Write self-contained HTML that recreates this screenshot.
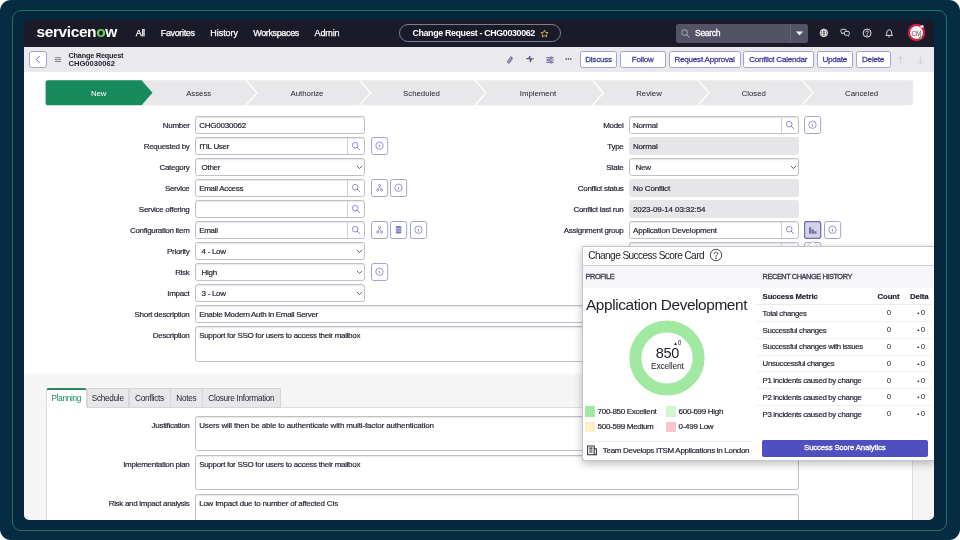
<!DOCTYPE html>
<html lang="en">
<head>
<meta charset="utf-8">
<title>Change Request - CHG0030062</title>
<style>
*{box-sizing:border-box;margin:0;padding:0}
html,body{width:960px;height:540px;overflow:hidden;background:#fff}
body{font-family:"Liberation Sans",sans-serif;font-size:8px;color:#1d1d2b;position:relative}
.abs{position:absolute}
#frame{position:absolute;left:0;top:0;width:960px;height:540px;background:#062c42;border-radius:11px;overflow:hidden}
#ring{position:absolute;left:12px;top:10px;width:935px;height:521px;border:1px solid #1f7460;border-radius:9px;background:#06283e}
#screen{position:absolute;left:24px;top:20px;width:910px;height:500px;background:linear-gradient(to bottom,#1a1a28 0,#1a1a28 40px,#f5f5f6 40px);border-radius:5px;overflow:hidden}
/* everything inside #screen uses page coords minus (24,20) via wrapper */
#w{position:absolute;left:-24px;top:-20px;width:960px;height:540px;will-change:transform}
#topbar{position:absolute;left:24px;top:20px;width:910px;height:27px;background:#1a1a28}
#subbar{position:absolute;left:24px;top:47px;width:910px;height:25px;background:#e9e9ee}
#formbg{position:absolute;left:24px;top:72px;width:910px;height:304px;background:linear-gradient(to bottom,#fff 0,#fff 299.5px,#f5f5f6 304px)}
.nav{position:absolute;top:27px;color:#fff;font-size:9px;line-height:12px;white-space:nowrap;-webkit-text-stroke:0.25px #fff}
.t{position:absolute;white-space:nowrap;line-height:10px}
.lbl{position:absolute;white-space:nowrap;line-height:10px;text-align:right;font-size:8px;letter-spacing:-0.3px;color:#1d1d2b;-webkit-text-stroke:0.18px #1d1d2b}
.inp{position:absolute;height:18px;border:1px solid #bfbfc8;border-radius:2.5px;background:#fff;box-shadow:inset 0 1px 1.5px rgba(0,0,0,.1);font-size:8px;letter-spacing:-0.3px;line-height:17.6px;padding-left:3px;-webkit-text-stroke:0.18px #1d1d2b;white-space:nowrap;overflow:hidden}
.ro{background:#e6e6e9;border-color:#e6e6e9;box-shadow:none}
.btn{position:absolute;top:50.8px;height:17.4px;border:1px solid #a3a1d6;border-radius:2.5px;background:#fff;color:#3c3c96;-webkit-text-stroke:0.28px #3c3c96;font-size:8.1px;letter-spacing:-0.24px;line-height:16.2px;text-align:center;white-space:nowrap}
.ib{position:absolute;width:17px;height:17px;border:1px solid #8f8fcf;border-radius:2px;background:#fff}
.f{font-size:8px;letter-spacing:-0.3px;-webkit-text-stroke:0.18px #1d1d2b}
.tab{position:absolute;top:388px;height:19.5px;border:1px solid #d6d6da;background:#e7e7e9;font-size:8.2px;letter-spacing:-0.29px;line-height:19px;text-align:center;white-space:nowrap;color:#23232f}
.tab.act{background:#fff;border-top:2px solid #24895f;border-left-color:#dcdce0;border-bottom-color:#fff;color:#178a5e;border-radius:3px 3px 0 0;line-height:18px}
.ta{height:35px;line-height:17.6px}
#pop{position:absolute;left:582px;top:246px;width:353px;height:215px;background:#fff;border:1px solid #c4c4cc;border-right:none;border-radius:0 0 0 3px;box-shadow:0 3px 8px rgba(0,0,0,.26)}
.sh{font-size:7.4px;color:#3a3a48;letter-spacing:-0.44px;-webkit-text-stroke:0.3px #3a3a48}
.th{font-size:7.8px;font-weight:bold;color:#1d1d28;letter-spacing:-0.12px;-webkit-text-stroke:0.15px #1d1d28}
</style>
</head>
<body>
<div id="frame">
<div id="ring"></div>
<div id="screen"><div id="w">
<div id="topbar"></div>
<div id="subbar"></div>
<div id="formbg"></div>
<!--TOPBAR-->
<div class="t" style="left:36.6px;top:22px;font-size:15.5px;line-height:20px;font-weight:bold;color:#fff;letter-spacing:-0.42px">servicen<span style="color:#62d84e">o</span>w</div>
<div class="nav" style="left:135.7px;letter-spacing:-0.3px">All</div>
<div class="nav" style="left:160.8px;letter-spacing:-0.36px">Favorites</div>
<div class="nav" style="left:210.2px;letter-spacing:-0.02px">History</div>
<div class="nav" style="left:253.2px;letter-spacing:-0.36px">Workspaces</div>
<div class="nav" style="left:314.6px;letter-spacing:-0.12px">Admin</div>
<div class="abs" style="left:399px;top:24px;width:161.5px;height:18.2px;border:1px solid #7d7d90;border-radius:10px"></div>
<div class="t" style="left:412.4px;top:26.8px;font-size:8.9px;line-height:12px;font-weight:bold;color:#fff;letter-spacing:-0.36px">Change Request - CHG0030062</div>
<svg class="abs" style="left:540.2px;top:29px" width="9" height="9" viewBox="0 0 10 10"><path d="M5 1.2 6.2 3.8 9 4.1 6.9 6 7.5 8.8 5 7.4 2.5 8.8 3.1 6 1 4.1 3.8 3.8Z" fill="none" stroke="#e8c46a" stroke-width="0.9" stroke-linejoin="round"/></svg>
<div class="abs" style="left:676px;top:24px;width:132px;height:18.5px;background:#535267;border-radius:2.5px"></div>
<div class="abs" style="left:790.3px;top:24px;width:1px;height:18.5px;background:#656479"></div>
<svg class="abs" style="left:680px;top:28px" width="11" height="11" viewBox="0 0 11 11"><circle cx="4.6" cy="4.6" r="2.9" fill="none" stroke="#b9b9c8" stroke-width="0.85"/><path d="M6.8 6.8 9.3 9.3" stroke="#b9b9c8" stroke-width="0.95" stroke-linecap="round"/></svg>
<div class="t" style="left:695px;top:27px;font-size:8.6px;line-height:12px;color:#fff;letter-spacing:-0.32px;-webkit-text-stroke:0.3px #fff">Search</div>
<svg class="abs" style="left:795px;top:31px" width="9" height="5" viewBox="0 0 9 5"><path d="M1 0.5H8L4.5 4.3Z" fill="#fff"/></svg>
<!-- globe -->
<svg class="abs" style="left:818.5px;top:28px" width="9.8" height="9.8" viewBox="0 0 11 11" fill="none" stroke="#fff" stroke-width="0.95"><circle cx="5.5" cy="5.5" r="4.2"/><ellipse cx="5.5" cy="5.5" rx="1.9" ry="4.2"/><path d="M1.3 5.5H9.7M2 3.3H9M2 7.7H9"/></svg>
<!-- chat -->
<svg class="abs" style="left:840px;top:28.2px" width="10.4" height="9.6" viewBox="0 0 12 11" fill="#1a1a28" stroke="#fff" stroke-width="0.95" stroke-linejoin="round"><path d="M2.6 1.5H5.6A1.6 1.6 0 0 1 7.2 3.1V4.1A1.6 1.6 0 0 1 5.6 5.7H3.6L2.2 6.8V5.6A1.6 1.6 0 0 1 1 4.1V3.1A1.6 1.6 0 0 1 2.6 1.5Z"/><path d="M6.6 3.9H9.2A1.6 1.6 0 0 1 10.8 5.5V6.7A1.6 1.6 0 0 1 9.8 8.2V9.4L8.3 8.3H6.6A1.6 1.6 0 0 1 5 6.7V5.5A1.6 1.6 0 0 1 6.6 3.9Z"/></svg>
<!-- help -->
<svg class="abs" style="left:861.5px;top:28.1px" width="10.2" height="10.2" viewBox="0 0 11 11" fill="none" stroke="#fff" stroke-width="0.95"><circle cx="5.5" cy="5.5" r="4.3"/><path d="M4.1 4.4C4.1 2.9 6.9 2.9 6.9 4.4C6.9 5.4 5.5 5.4 5.5 6.5" stroke-linecap="round"/><circle cx="5.5" cy="7.9" r="0.3" fill="#fff"/></svg>
<!-- bell -->
<svg class="abs" style="left:883.5px;top:27.7px" width="10.4" height="10.4" viewBox="0 0 11 11" fill="none" stroke="#fff" stroke-width="0.95" stroke-linejoin="round"><path d="M2 7.8C3 6.9 2.8 5.4 3 4.2C3.3 2.8 4.3 2 5.5 2C6.7 2 7.7 2.8 8 4.2C8.2 5.4 8 6.9 9 7.8Z"/><path d="M4.6 9.1C5 9.7 6 9.7 6.4 9.1"/></svg>
<!-- avatar -->
<div class="abs" style="left:908.1px;top:24.2px;width:17.2px;height:17.2px;border-radius:50%;background:#faf0f2;border:2.5px solid #d3214c;box-shadow:0 0 1px #d3214c"></div>
<div class="t" style="left:911.6px;top:28.5px;font-size:6.4px;line-height:9px;color:#55555f;letter-spacing:-0.3px">CM</div>
<div class="abs" style="left:919.3px;top:35.5px;width:3px;height:3px;border-radius:50%;background:#6cc04a"></div>
<div class="abs" style="left:920.4px;top:24.6px;width:3.8px;height:3.8px;border-radius:50%;background:#fff;border:0.8px solid #e8b4c0"></div>
<!--SUBBAR-->
<div class="abs" style="left:29.3px;top:50.7px;width:17.5px;height:17.4px;border:1px solid #a3a1d6;border-radius:3px;background:#fff"></div>
<svg class="abs" style="left:34px;top:55px" width="8" height="9" viewBox="0 0 8 9"><path d="M5.4 1.2 2.4 4.5 5.4 7.8" fill="none" stroke="#6e6cb5" stroke-width="1" stroke-linecap="round" stroke-linejoin="round"/></svg>
<svg class="abs" style="left:54px;top:56px" width="8" height="7" viewBox="0 0 8 7"><path d="M1 1.7H7M1 3.6H7M1 5.5H7" stroke="#6a6a78" stroke-width="0.8"/></svg>
<div class="t" style="left:68.5px;top:50.8px;font-size:7.3px;line-height:9px;font-weight:bold;color:#23232f;letter-spacing:-0.2px">Change Request</div>
<div class="t" style="left:68.5px;top:59.4px;font-size:7.6px;line-height:9px;font-weight:bold;color:#23232f">CHG0030062</div>
<!-- icons -->
<svg class="abs" style="left:505.4px;top:54.6px" width="10" height="10" viewBox="0 0 10 10" fill="none" stroke="#7a79b2" stroke-width="1.15" stroke-linecap="round"><path d="M7.3 3.6 4.4 7.6C3.6 8.7 1.9 7.5 2.7 6.4L5.6 2.3C6.2 1.5 7.5 2.4 6.9 3.2L4.3 6.8"/></svg>
<svg class="abs" style="left:525px;top:54.4px" width="10" height="10" viewBox="0 0 10 10" fill="none" stroke="#4d4d7c" stroke-width="1.1" stroke-linejoin="round" stroke-linecap="round"><path d="M1.7 4.6H4L4.8 2.2 5.4 7.8 6.3 4.8H8.3"/></svg>
<svg class="abs" style="left:544.5px;top:54.6px" width="10" height="10" viewBox="0 0 10 10" fill="none" stroke="#55558a" stroke-width="0.9"><path d="M1.3 2.7H8.7M1.3 5H8.7M1.3 7.3H8.7"/><circle cx="6.2" cy="2.7" r="0.9" fill="#e9e9ee"/><circle cx="3.6" cy="5" r="0.9" fill="#e9e9ee"/><circle cx="6.2" cy="7.3" r="0.9" fill="#e9e9ee"/></svg>
<svg class="abs" style="left:564.4px;top:57.2px" width="9" height="4" viewBox="0 0 9 4"><circle cx="2.2" cy="2" r="0.8" fill="#2e2e46"/><circle cx="4.5" cy="2" r="0.8" fill="#2e2e46"/><circle cx="6.8" cy="2" r="0.8" fill="#2e2e46"/></svg>
<div class="btn" style="left:580px;width:37px">Discuss</div>
<div class="btn" style="left:620px;width:45.5px">Follow</div>
<div class="btn" style="left:668.5px;width:72px">Request Approval</div>
<div class="btn" style="left:743px;width:70.5px">Conflict Calendar</div>
<div class="btn" style="left:816.5px;width:36.5px">Update</div>
<div class="btn" style="left:855.5px;width:35px">Delete</div>
<svg class="abs" style="left:896px;top:55px" width="9" height="10" viewBox="0 0 9 10" fill="none" stroke="#cfcfd6" stroke-width="0.9" stroke-linecap="round" stroke-linejoin="round"><path d="M4.5 8.4V1.8M2 4.2 4.5 1.7 7 4.2"/></svg>
<svg class="abs" style="left:916px;top:55px" width="9" height="10" viewBox="0 0 9 10" fill="none" stroke="#cfcfd6" stroke-width="0.9" stroke-linecap="round" stroke-linejoin="round"><path d="M4.5 1.6V8.2M2 5.8 4.5 8.3 7 5.8"/></svg>
<!--FLOW-->
<svg class="abs" style="left:45px;top:79px" width="870" height="28" viewBox="45 79 870 28">
<rect x="45.6" y="80.3" width="867.3" height="25" rx="2" fill="#e8e8ea"/>
<path d="M47.6 80.3H141.5L152.5 92.8 141.5 105.3H47.6A2 2 0 0 1 45.6 103.3V82.3A2 2 0 0 1 47.6 80.3Z" fill="#178a5e"/>
<g fill="none" stroke="#fff" stroke-width="1.3">
<path d="M246 80.3 257 92.8 246 105.3"/><path d="M359.6 80.3 370.6 92.8 359.6 105.3"/><path d="M475 80.3 486 92.8 475 105.3"/><path d="M592.4 80.3 603.4 92.8 592.4 105.3"/><path d="M698 80.3 709 92.8 698 105.3"/><path d="M802 80.3 813 92.8 802 105.3"/>
</g>
<g font-family="Liberation Sans, sans-serif" font-size="7.8" text-anchor="middle" fill="#23232f">
<text x="98.7" y="95.5" fill="#fff">New</text><text x="198.7" y="95.5">Assess</text><text x="307" y="95.5">Authorize</text><text x="421.5" y="95.5">Scheduled</text><text x="538" y="95.5">Implement</text><text x="649" y="95.5">Review</text><text x="753.8" y="95.5">Closed</text><text x="861.6" y="95.5">Canceled</text>
</g>
</svg>
<!--FORM-->
<div class="lbl" style="right:770.5px;top:121.0px">Number</div>
<div class="inp" style="left:195.2px;top:116.0px;width:169.7px;letter-spacing:-0.2px">CHG0030062</div>
<div class="lbl" style="right:770.5px;top:142.0px">Requested by</div>
<div class="inp" style="left:195.2px;top:137.0px;width:169.7px">ITIL User</div>
<div class="abs" style="left:347.3px;top:138.0px;width:1px;height:16px;background:#cfcfd6"></div>
<svg class="abs" style="left:351.1px;top:141px" width="10" height="10" viewBox="0 0 10 10"><circle cx="4.2" cy="4.2" r="2.8" fill="none" stroke="#7776bd" stroke-width="0.8"/><path d="M6.3 6.3 8.6 8.6" stroke="#7776bd" stroke-width="0.9" stroke-linecap="round"/></svg>
<div class="lbl" style="right:770.5px;top:163.0px">Category</div>
<div class="inp" style="left:195.2px;top:158.0px;width:169.7px;padding-left:5.4px">Other</div>
<svg class="abs" style="left:356.4px;top:164.8px" width="7" height="5" viewBox="0 0 7 5"><path d="M1.2 1.2 3.5 3.5 5.8 1.2" fill="none" stroke="#3d3d4d" stroke-width="0.8" stroke-linecap="round" stroke-linejoin="round"/></svg>
<div class="lbl" style="right:770.5px;top:184.0px">Service</div>
<div class="inp" style="left:195.2px;top:179.0px;width:169.7px">Email Access</div>
<div class="abs" style="left:347.3px;top:180.0px;width:1px;height:16px;background:#cfcfd6"></div>
<svg class="abs" style="left:351.1px;top:183px" width="10" height="10" viewBox="0 0 10 10"><circle cx="4.2" cy="4.2" r="2.8" fill="none" stroke="#7776bd" stroke-width="0.8"/><path d="M6.3 6.3 8.6 8.6" stroke="#7776bd" stroke-width="0.9" stroke-linecap="round"/></svg>
<div class="lbl" style="right:770.5px;top:205.0px">Service offering</div>
<div class="inp" style="left:195.2px;top:200.0px;width:169.7px"></div>
<div class="abs" style="left:347.3px;top:201.0px;width:1px;height:16px;background:#cfcfd6"></div>
<svg class="abs" style="left:351.1px;top:204px" width="10" height="10" viewBox="0 0 10 10"><circle cx="4.2" cy="4.2" r="2.8" fill="none" stroke="#7776bd" stroke-width="0.8"/><path d="M6.3 6.3 8.6 8.6" stroke="#7776bd" stroke-width="0.9" stroke-linecap="round"/></svg>
<div class="lbl" style="right:770.5px;top:226.0px">Configuration item</div>
<div class="inp" style="left:195.2px;top:221.0px;width:169.7px">Email</div>
<div class="abs" style="left:347.3px;top:222.0px;width:1px;height:16px;background:#cfcfd6"></div>
<svg class="abs" style="left:351.1px;top:225px" width="10" height="10" viewBox="0 0 10 10"><circle cx="4.2" cy="4.2" r="2.8" fill="none" stroke="#7776bd" stroke-width="0.8"/><path d="M6.3 6.3 8.6 8.6" stroke="#7776bd" stroke-width="0.9" stroke-linecap="round"/></svg>
<div class="lbl" style="right:770.5px;top:247.0px">Priority</div>
<div class="inp" style="left:195.2px;top:242.0px;width:169.7px;padding-left:5.4px">4 - Low</div>
<svg class="abs" style="left:356.4px;top:248.8px" width="7" height="5" viewBox="0 0 7 5"><path d="M1.2 1.2 3.5 3.5 5.8 1.2" fill="none" stroke="#3d3d4d" stroke-width="0.8" stroke-linecap="round" stroke-linejoin="round"/></svg>
<div class="lbl" style="right:770.5px;top:268.0px">Risk</div>
<div class="inp" style="left:195.2px;top:263.0px;width:169.7px;padding-left:5.4px">High</div>
<svg class="abs" style="left:356.4px;top:269.8px" width="7" height="5" viewBox="0 0 7 5"><path d="M1.2 1.2 3.5 3.5 5.8 1.2" fill="none" stroke="#3d3d4d" stroke-width="0.8" stroke-linecap="round" stroke-linejoin="round"/></svg>
<div class="lbl" style="right:770.5px;top:289.0px">Impact</div>
<div class="inp" style="left:195.2px;top:284.0px;width:169.7px;padding-left:5.4px">3 - Low</div>
<svg class="abs" style="left:356.4px;top:290.8px" width="7" height="5" viewBox="0 0 7 5"><path d="M1.2 1.2 3.5 3.5 5.8 1.2" fill="none" stroke="#3d3d4d" stroke-width="0.8" stroke-linecap="round" stroke-linejoin="round"/></svg>
<svg class="abs" style="left:370.5px;top:137.0px" width="18" height="18" viewBox="0 0 18 18"><rect x="0.5" y="0.5" width="16.2" height="17" rx="2.2" fill="#fff" stroke="#9a98d0" stroke-width="0.9"/><circle cx="8.5" cy="8.7" r="3.7" fill="none" stroke="#6d6cb8" stroke-width="0.7"/><path d="M8.5 8V10.6" stroke="#6d6cb8" stroke-width="0.7"/><circle cx="8.5" cy="6.9" r="0.4" fill="#6d6cb8"/></svg>
<svg class="abs" style="left:370.5px;top:179.0px" width="18" height="18" viewBox="0 0 18 18"><rect x="0.5" y="0.5" width="16.2" height="17" rx="2.2" fill="#fff" stroke="#9a98d0" stroke-width="0.9"/><g fill="none" stroke="#6d6cb8" stroke-width="0.7"><circle cx="8.6" cy="6.4" r="1.05"/><circle cx="6.7" cy="11.1" r="1.05"/><circle cx="10.5" cy="11.1" r="1.05"/><path d="M8.6 7.5V8.3L6.9 10M8.6 8.3 10.3 10"/></g></svg>
<svg class="abs" style="left:390px;top:179.0px" width="18" height="18" viewBox="0 0 18 18"><rect x="0.5" y="0.5" width="16.2" height="17" rx="2.2" fill="#fff" stroke="#9a98d0" stroke-width="0.9"/><circle cx="8.5" cy="8.7" r="3.7" fill="none" stroke="#6d6cb8" stroke-width="0.7"/><path d="M8.5 8V10.6" stroke="#6d6cb8" stroke-width="0.7"/><circle cx="8.5" cy="6.9" r="0.4" fill="#6d6cb8"/></svg>
<svg class="abs" style="left:370.5px;top:221.0px" width="18" height="18" viewBox="0 0 18 18"><rect x="0.5" y="0.5" width="16.2" height="17" rx="2.2" fill="#fff" stroke="#9a98d0" stroke-width="0.9"/><g fill="none" stroke="#6d6cb8" stroke-width="0.7"><circle cx="8.6" cy="6.4" r="1.05"/><circle cx="6.7" cy="11.1" r="1.05"/><circle cx="10.5" cy="11.1" r="1.05"/><path d="M8.6 7.5V8.3L6.9 10M8.6 8.3 10.3 10"/></g></svg>
<svg class="abs" style="left:390px;top:221.0px" width="18" height="18" viewBox="0 0 18 18"><rect x="0.5" y="0.5" width="16.2" height="17" rx="2.2" fill="#fff" stroke="#9a98d0" stroke-width="0.9"/><g><rect x="5.9" y="5" width="5.4" height="7.6" rx="1.3" fill="#7a79c6"/><path d="M5.9 7.6H11.3M5.9 10H11.3" stroke="#fff" stroke-width="0.6"/></g></svg>
<svg class="abs" style="left:409.7px;top:221.0px" width="18" height="18" viewBox="0 0 18 18"><rect x="0.5" y="0.5" width="16.2" height="17" rx="2.2" fill="#fff" stroke="#9a98d0" stroke-width="0.9"/><circle cx="8.5" cy="8.7" r="3.7" fill="none" stroke="#6d6cb8" stroke-width="0.7"/><path d="M8.5 8V10.6" stroke="#6d6cb8" stroke-width="0.7"/><circle cx="8.5" cy="6.9" r="0.4" fill="#6d6cb8"/></svg>
<svg class="abs" style="left:370.5px;top:263.0px" width="18" height="18" viewBox="0 0 18 18"><rect x="0.5" y="0.5" width="16.2" height="17" rx="2.2" fill="#fff" stroke="#9a98d0" stroke-width="0.9"/><circle cx="8.5" cy="8.7" r="3.7" fill="none" stroke="#6d6cb8" stroke-width="0.7"/><path d="M8.5 8V10.6" stroke="#6d6cb8" stroke-width="0.7"/><circle cx="8.5" cy="6.9" r="0.4" fill="#6d6cb8"/></svg>
<div class="lbl" style="right:770.5px;top:310.0px">Short description</div>
<div class="inp" style="left:195.2px;top:305.0px;width:603.8px">Enable Modern Auth in Email Server</div>
<div class="lbl" style="right:770.5px;top:331.0px">Description</div>
<div class="inp ta" style="left:195.2px;top:326px;width:603.8px;height:36px">Support for SSO for users to access their mailbox</div>
<div class="lbl" style="right:336.5px;top:121.0px">Model</div>
<div class="inp" style="left:629px;top:116.0px;width:169.7px;letter-spacing:-0.18px">Normal</div>
<div class="abs" style="left:781.1px;top:117.0px;width:1px;height:16px;background:#cfcfd6"></div>
<svg class="abs" style="left:784.9px;top:120px" width="10" height="10" viewBox="0 0 10 10"><circle cx="4.2" cy="4.2" r="2.8" fill="none" stroke="#7776bd" stroke-width="0.8"/><path d="M6.3 6.3 8.6 8.6" stroke="#7776bd" stroke-width="0.9" stroke-linecap="round"/></svg>
<div class="lbl" style="right:336.5px;top:142.0px">Type</div>
<div class="inp ro" style="left:629px;top:137.0px;width:169.7px;letter-spacing:-0.18px">Normal</div>
<div class="lbl" style="right:336.5px;top:163.0px">State</div>
<div class="inp" style="left:629px;top:158.0px;width:169.7px;letter-spacing:-0.2px;padding-left:5.4px">New</div>
<svg class="abs" style="left:790.2px;top:164.8px" width="7" height="5" viewBox="0 0 7 5"><path d="M1.2 1.2 3.5 3.5 5.8 1.2" fill="none" stroke="#3d3d4d" stroke-width="0.8" stroke-linecap="round" stroke-linejoin="round"/></svg>
<div class="lbl" style="right:336.5px;top:184.0px">Conflict status</div>
<div class="inp ro" style="left:629px;top:179.0px;width:169.7px;letter-spacing:-0.2px">No Conflict</div>
<div class="lbl" style="right:336.5px;top:205.0px">Conflict last run</div>
<div class="inp ro" style="left:629px;top:200.0px;width:169.7px;letter-spacing:-0.1px">2023-09-14 03:32:54</div>
<div class="lbl" style="right:336.5px;top:226.0px">Assignment group</div>
<div class="inp" style="left:629px;top:221.0px;width:169.7px;letter-spacing:-0.2px">Application Development</div>
<div class="abs" style="left:781.1px;top:222.0px;width:1px;height:16px;background:#cfcfd6"></div>
<svg class="abs" style="left:784.9px;top:225px" width="10" height="10" viewBox="0 0 10 10"><circle cx="4.2" cy="4.2" r="2.8" fill="none" stroke="#7776bd" stroke-width="0.8"/><path d="M6.3 6.3 8.6 8.6" stroke="#7776bd" stroke-width="0.9" stroke-linecap="round"/></svg>
<div class="inp" style="left:629px;top:242.0px;width:169.7px"></div>
<div class="abs" style="left:781.1px;top:243.0px;width:1px;height:16px;background:#cfcfd6"></div>
<svg class="abs" style="left:784.9px;top:246px" width="10" height="10" viewBox="0 0 10 10"><circle cx="4.2" cy="4.2" r="2.8" fill="none" stroke="#7776bd" stroke-width="0.8"/><path d="M6.3 6.3 8.6 8.6" stroke="#7776bd" stroke-width="0.9" stroke-linecap="round"/></svg>
<svg class="abs" style="left:804px;top:116.0px" width="18" height="18" viewBox="0 0 18 18"><rect x="0.5" y="0.5" width="16.2" height="17" rx="2.2" fill="#fff" stroke="#9a98d0" stroke-width="0.9"/><circle cx="8.5" cy="8.7" r="3.7" fill="none" stroke="#6d6cb8" stroke-width="0.7"/><path d="M8.5 8V10.6" stroke="#6d6cb8" stroke-width="0.7"/><circle cx="8.5" cy="6.9" r="0.4" fill="#6d6cb8"/></svg>
<svg class="abs" style="left:804.2px;top:221.0px" width="18" height="18" viewBox="0 0 18 18"><rect x="0.5" y="0.5" width="16.2" height="17" rx="2.2" fill="#d3d2ea" stroke="#6f6eae" stroke-width="1.3"/><g fill="#706f9e"><rect x="5.1" y="6.3" width="2.2" height="6.4" rx="0.3"/><rect x="7.6" y="8.6" width="2.4" height="4.1" rx="0.3"/><rect x="10.3" y="10.2" width="2.3" height="2.5" rx="0.3"/></g></svg>
<svg class="abs" style="left:824px;top:221.0px" width="18" height="18" viewBox="0 0 18 18"><rect x="0.5" y="0.5" width="16.2" height="17" rx="2.2" fill="#fff" stroke="#9a98d0" stroke-width="0.9"/><circle cx="8.5" cy="8.7" r="3.7" fill="none" stroke="#6d6cb8" stroke-width="0.7"/><path d="M8.5 8V10.6" stroke="#6d6cb8" stroke-width="0.7"/><circle cx="8.5" cy="6.9" r="0.4" fill="#6d6cb8"/></svg>
<svg class="abs" style="left:804px;top:242.0px" width="18" height="18" viewBox="0 0 18 18"><rect x="0.5" y="0.5" width="16.2" height="17" rx="2.2" fill="#fff" stroke="#9a98d0" stroke-width="0.9"/><circle cx="8.5" cy="8.7" r="3.7" fill="none" stroke="#6d6cb8" stroke-width="0.7"/><path d="M8.5 8V10.6" stroke="#6d6cb8" stroke-width="0.7"/><circle cx="8.5" cy="6.9" r="0.4" fill="#6d6cb8"/></svg>
<!--TABS-->
<div class="abs" style="left:45.5px;top:407px;width:867.5px;height:140px;background:#fff;border:1px solid #dcdce0"></div>
<div class="tab" style="left:86.5px;width:42.5px">Schedule</div>
<div class="tab" style="left:128.5px;width:42px">Conflicts</div>
<div class="tab" style="left:170px;width:32.5px">Notes</div>
<div class="tab" style="left:202px;width:78.5px">Closure Information</div>
<div class="tab act" style="left:45.5px;width:41.5px">Planning</div>
<div class="lbl" style="right:770.5px;top:421px">Justification</div>
<div class="inp ta" style="left:195.2px;top:416px;width:603.8px;letter-spacing:-0.15px">Users will then be able to authenticate with multi-factor authentication</div>
<div class="lbl" style="right:770.5px;top:460px">Implementation plan</div>
<div class="inp ta" style="left:195.2px;top:455px;width:603.8px;letter-spacing:-0.3px">Support for SSO for users to access their mailbox</div>
<div class="lbl" style="right:770.5px;top:499px">Risk and impact analysis</div>
<div class="inp ta" style="left:195.2px;top:494px;width:603.8px;letter-spacing:-0.24px">Low Impact due to number of affected CIs</div>
<!--POPUP-->
<svg class="abs" style="left:804px;top:240px" width="18" height="8" viewBox="0 0 18 8"><path d="M1.5 8 8.7 1 16 8Z" fill="#fff" stroke="#b9b9c4" stroke-width="0.8"/></svg>
<div id="pop"></div>
<div class="t" style="left:588.3px;top:249.2px;font-size:10.1px;line-height:13px;letter-spacing:-0.58px;color:#23232f">Change Success Score Card</div>
<svg class="abs" style="left:708.8px;top:248.2px" width="14" height="14" viewBox="0 0 14 14" fill="none" stroke="#2a2a36" stroke-width="0.85"><circle cx="7" cy="7" r="5.7"/><path d="M5.2 5.6C5.2 3.6 8.8 3.6 8.8 5.6C8.8 6.9 7 6.9 7 8.4" stroke-linecap="round"/><circle cx="7" cy="10.2" r="0.4" fill="#2a2a36"/></svg>
<div class="abs" style="left:583px;top:264.8px;width:351px;height:23px;background:#f6f6f8;border-top:1px solid #cfcfd6"></div>
<div class="t sh" style="left:585.6px;top:271.6px;">PROFILE</div>
<div class="t sh" style="left:762.6px;top:271.6px;">RECENT CHANGE HISTORY</div>
<div class="t" style="left:586px;top:294.5px;font-size:15.4px;line-height:20px;letter-spacing:-0.4px;color:#23232f">Application Development</div>
<svg class="abs" style="left:626.3px;top:317.4px" width="82" height="82" viewBox="0 0 82 82"><circle cx="41" cy="41" r="31.6" fill="none" stroke="#a1e8a0" stroke-width="12"/></svg>
<div class="t" style="left:637.3px;top:345.3px;width:60px;text-align:center;font-size:14.5px;line-height:16px;letter-spacing:-0.4px;color:#23232f">850</div>
<div class="t" style="left:637.3px;top:361.3px;width:60px;text-align:center;font-size:8.5px;line-height:10px;letter-spacing:-0.2px;color:#23232f">Excellent</div>
<div class="t" style="left:673.2px;top:338.6px;font-size:6.5px;line-height:8px;color:#23232f"><span style="font-size:4.6px;vertical-align:0.3px">&#9650;</span>0</div>
<div class="abs" style="left:584.6px;top:406.4px;width:10.4px;height:10.4px;background:#a1e8a0"></div>
<div class="t f" style="left:597.6px;top:406.79999999999995px;">700-850 Excellent</div>
<div class="abs" style="left:665.6px;top:406.4px;width:10.4px;height:10.4px;background:#d4f3d1"></div>
<div class="t f" style="left:678.6px;top:406.79999999999995px;">600-699 High</div>
<div class="abs" style="left:584.6px;top:421.8px;width:10.4px;height:10.4px;background:#fdefc6"></div>
<div class="t f" style="left:597.6px;top:422.2px;">500-599 Medium</div>
<div class="abs" style="left:665.6px;top:421.8px;width:10.4px;height:10.4px;background:#f9c4cb"></div>
<div class="t f" style="left:678.6px;top:422.2px;">0-499 Low</div>
<div class="abs" style="left:584.5px;top:440.6px;width:168px;height:1px;background:#eeeef2"></div>
<svg class="abs" style="left:585.6px;top:444.2px" width="12" height="12.6" viewBox="0 0 11 11" fill="none" stroke="#2a2a36" stroke-width="0.95"><path d="M1.5 1.5H7.5V9.5H1.5ZM7.5 4H9.5V9.5H7.5M3 3.5H6M3 5.3H6M3 7.1H6"/></svg>
<div class="t f" style="left:602.8px;top:446.2px;">Team Develops ITSM Applications in London</div>
<div class="abs" style="left:761.5px;top:439.6px;width:166.6px;height:17.1px;background:#4f4fc0;border-radius:2px"></div>
<div class="t" style="left:761.5px;top:443.3px;width:166.6px;text-align:center;font-size:7.9px;line-height:10px;color:#fff;letter-spacing:-0.2px;-webkit-text-stroke:0.3px #fff">Success Score Analytics</div>
<div class="t th" style="left:762.6px;top:292.3px;">Success Metric</div>
<div class="t th" style="left:873.5px;top:292.3px;width:30px;text-align:center">Count</div>
<div class="t th" style="left:904.2px;top:292.3px;width:30px;text-align:center">Delta</div>
<div class="abs" style="left:756px;top:303.8px;width:176px;height:1px;background:#ececf0"></div>
<div class="t f" style="left:762.6px;top:308.8px;font-size:7.8px;letter-spacing:-0.31px">Total changes</div>
<div class="t f" style="left:878.9px;top:308.4px;width:20px;text-align:center;font-size:7.9px;-webkit-text-stroke:0">0</div>
<div class="t f" style="left:916.6px;top:308.4px;font-size:7.9px;-webkit-text-stroke:0"><span style="font-size:3.6px;vertical-align:1.3px;letter-spacing:0.5px">&#9650;</span>0</div>
<div class="abs" style="left:756px;top:320.9px;width:176px;height:1px;background:#f0f0f4"></div>
<div class="t f" style="left:762.6px;top:325.6px;font-size:7.8px;letter-spacing:-0.31px">Successful changes</div>
<div class="t f" style="left:878.9px;top:325.2px;width:20px;text-align:center;font-size:7.9px;-webkit-text-stroke:0">0</div>
<div class="t f" style="left:916.6px;top:325.2px;font-size:7.9px;-webkit-text-stroke:0"><span style="font-size:3.6px;vertical-align:1.3px;letter-spacing:0.5px">&#9650;</span>0</div>
<div class="abs" style="left:756px;top:337.7px;width:176px;height:1px;background:#f0f0f4"></div>
<div class="t f" style="left:762.6px;top:342.4px;font-size:7.8px;letter-spacing:-0.31px">Successful changes with issues</div>
<div class="t f" style="left:878.9px;top:342.0px;width:20px;text-align:center;font-size:7.9px;-webkit-text-stroke:0">0</div>
<div class="t f" style="left:916.6px;top:342.0px;font-size:7.9px;-webkit-text-stroke:0"><span style="font-size:3.6px;vertical-align:1.3px;letter-spacing:0.5px">&#9650;</span>0</div>
<div class="abs" style="left:756px;top:354.5px;width:176px;height:1px;background:#f0f0f4"></div>
<div class="t f" style="left:762.6px;top:359.2px;font-size:7.8px;letter-spacing:-0.31px">Unsuccessful changes</div>
<div class="t f" style="left:878.9px;top:358.8px;width:20px;text-align:center;font-size:7.9px;-webkit-text-stroke:0">0</div>
<div class="t f" style="left:916.6px;top:358.8px;font-size:7.9px;-webkit-text-stroke:0"><span style="font-size:3.6px;vertical-align:1.3px;letter-spacing:0.5px">&#9650;</span>0</div>
<div class="abs" style="left:756px;top:371.3px;width:176px;height:1px;background:#f0f0f4"></div>
<div class="t f" style="left:762.6px;top:376.0px;font-size:7.8px;letter-spacing:-0.31px">P1 incidents caused by change</div>
<div class="t f" style="left:878.9px;top:375.6px;width:20px;text-align:center;font-size:7.9px;-webkit-text-stroke:0">0</div>
<div class="t f" style="left:916.6px;top:375.6px;font-size:7.9px;-webkit-text-stroke:0"><span style="font-size:3.6px;vertical-align:1.3px;letter-spacing:0.5px">&#9650;</span>0</div>
<div class="abs" style="left:756px;top:388.1px;width:176px;height:1px;background:#f0f0f4"></div>
<div class="t f" style="left:762.6px;top:392.8px;font-size:7.8px;letter-spacing:-0.31px">P2 incidents caused by change</div>
<div class="t f" style="left:878.9px;top:392.4px;width:20px;text-align:center;font-size:7.9px;-webkit-text-stroke:0">0</div>
<div class="t f" style="left:916.6px;top:392.4px;font-size:7.9px;-webkit-text-stroke:0"><span style="font-size:3.6px;vertical-align:1.3px;letter-spacing:0.5px">&#9650;</span>0</div>
<div class="abs" style="left:756px;top:404.9px;width:176px;height:1px;background:#f0f0f4"></div>
<div class="t f" style="left:762.6px;top:409.6px;font-size:7.8px;letter-spacing:-0.31px">P3 incidents caused by change</div>
<div class="t f" style="left:878.9px;top:409.2px;width:20px;text-align:center;font-size:7.9px;-webkit-text-stroke:0">0</div>
<div class="t f" style="left:916.6px;top:409.2px;font-size:7.9px;-webkit-text-stroke:0"><span style="font-size:3.6px;vertical-align:1.3px;letter-spacing:0.5px">&#9650;</span>0</div>
</div></div>
</div>
</body>
</html>
